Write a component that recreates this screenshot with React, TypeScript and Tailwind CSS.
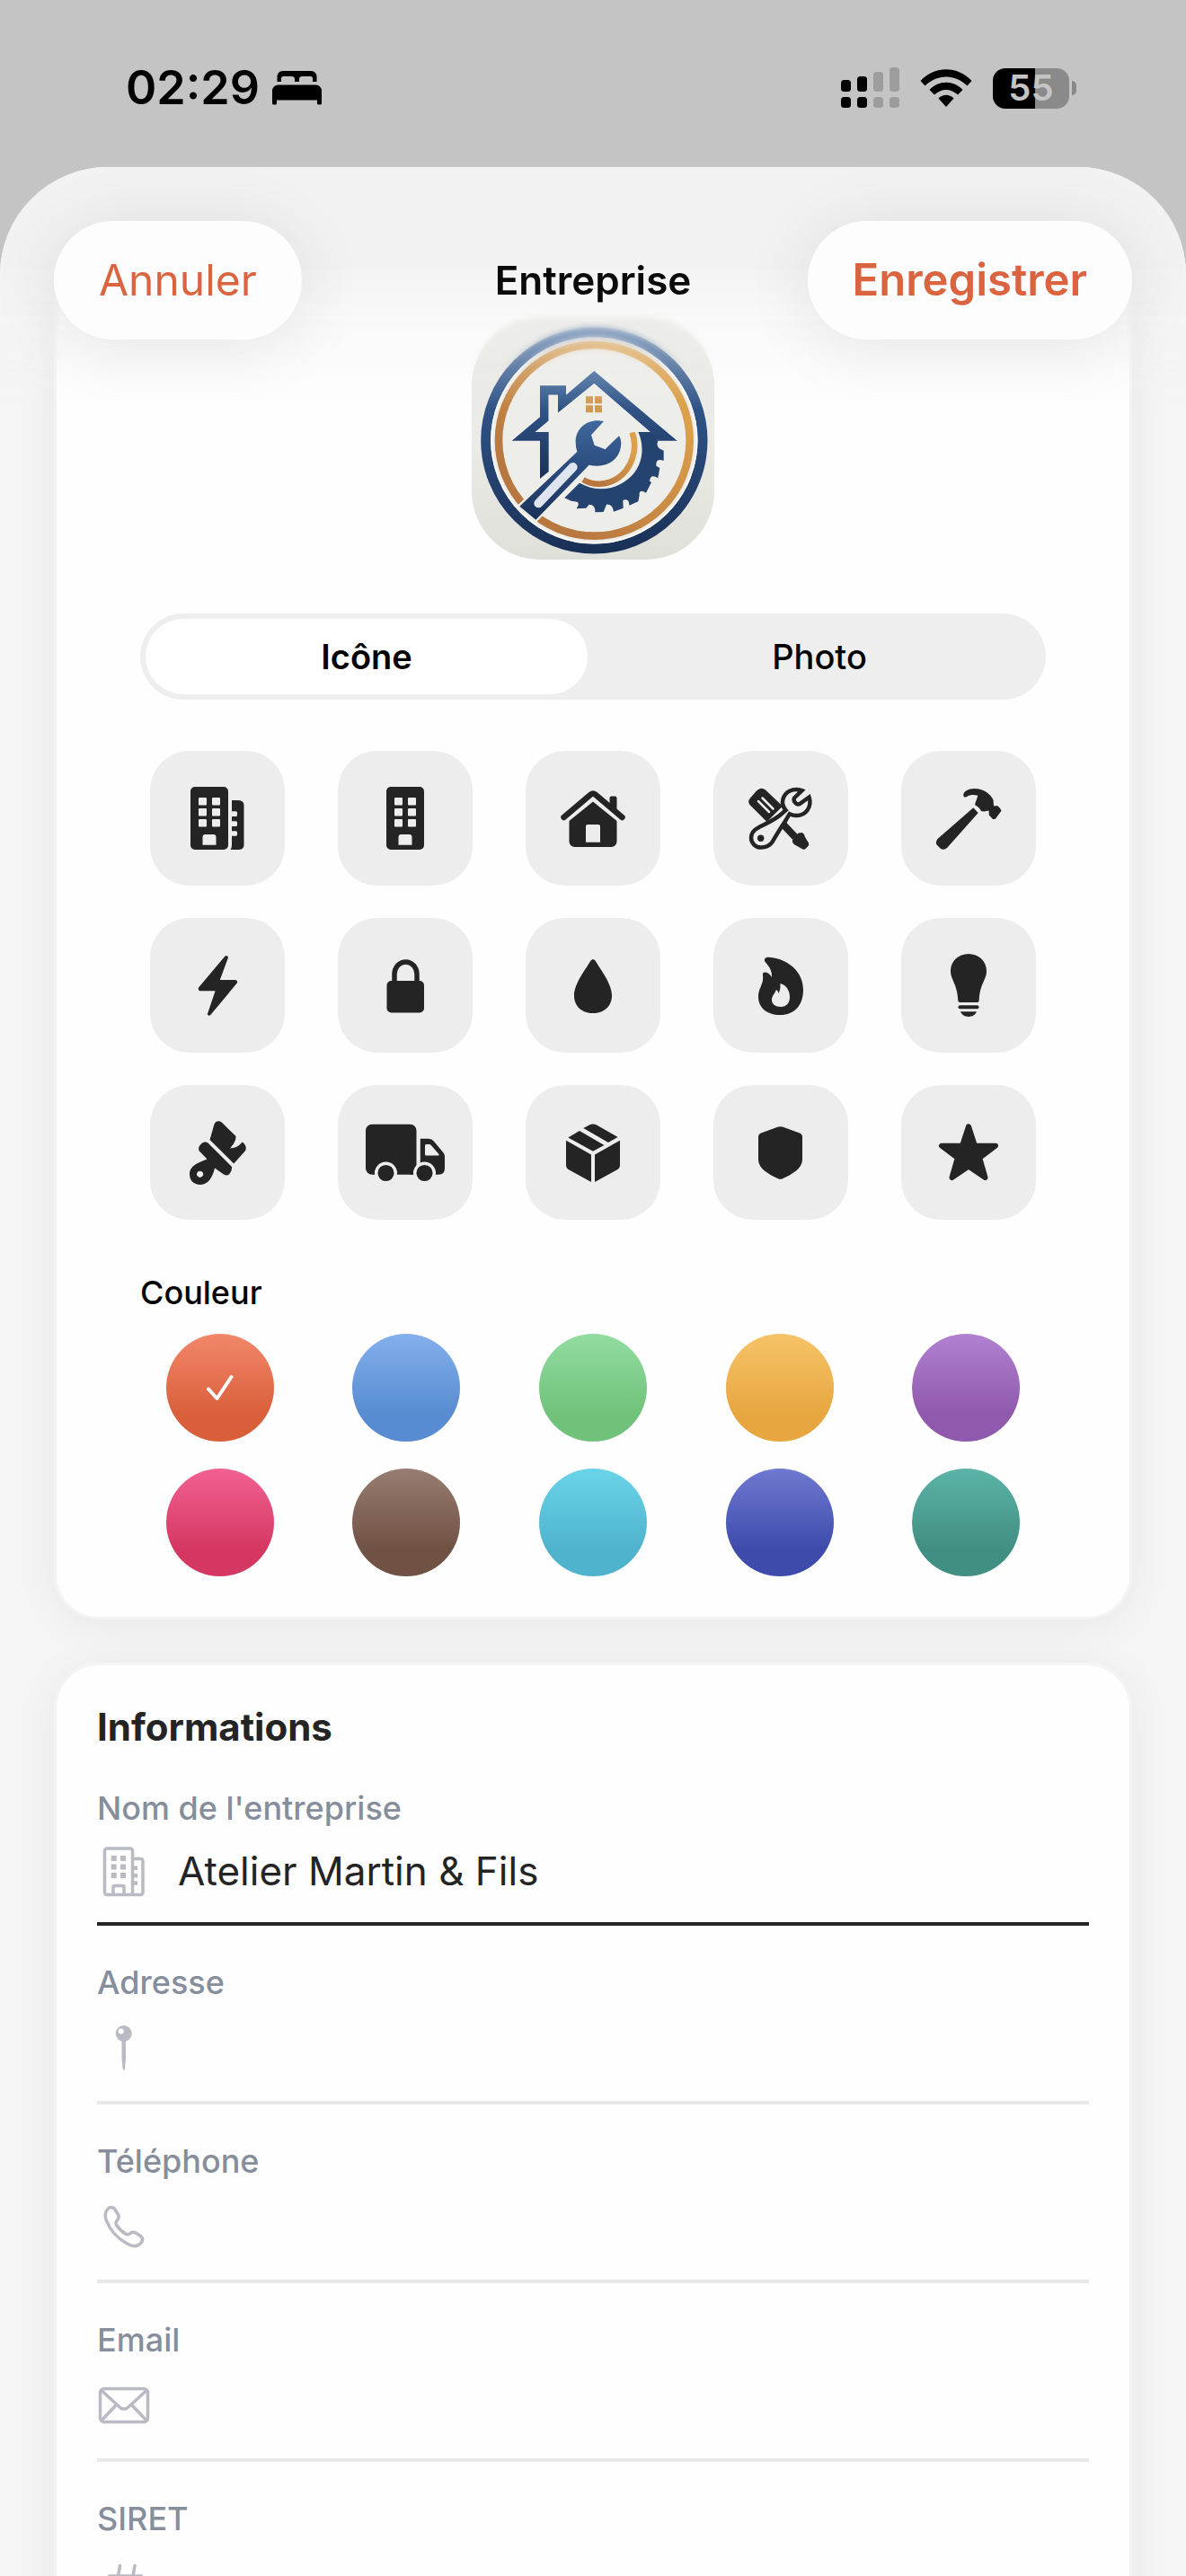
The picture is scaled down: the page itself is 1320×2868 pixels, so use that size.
import { useState } from "react";
import type { ReactNode } from "react";

interface IconChoice {
  id: string;
  label: string;
  art: ReactNode;
}

interface Swatch {
  id: string;
  label: string;
  gradient: string;
}

interface FieldType {
  id: string;
  label: string;
  type: string;
  art: ReactNode;
}

// Tile icons are drawn on a 150x150 grid
const ICONS: IconChoice[] = [
  {
    id: "buildings",
    label: "Immeubles",
    art: (
      <>
        <path
          fillRule="evenodd"
          d="M50 40h32a5 5 0 0 1 5 5v60a5 5 0 0 1-5 5H50a5 5 0 0 1-5-5V45a5 5 0 0 1 5-5ZM55 52a1 1 0 0 0-1 1v6.500a1 1 0 0 0 1 1h7a1 1 0 0 0 1-1V53a1 1 0 0 0-1-1ZM70 52a1 1 0 0 0-1 1v6.500a1 1 0 0 0 1 1h7a1 1 0 0 0 1-1V53a1 1 0 0 0-1-1ZM55 64a1 1 0 0 0-1 1v6.500a1 1 0 0 0 1 1h7a1 1 0 0 0 1-1V65a1 1 0 0 0-1-1ZM70 64a1 1 0 0 0-1 1v6.500a1 1 0 0 0 1 1h7a1 1 0 0 0 1-1V65a1 1 0 0 0-1-1ZM55 76a1 1 0 0 0-1 1v6.500a1 1 0 0 0 1 1h7a1 1 0 0 0 1-1V77a1 1 0 0 0-1-1ZM70 76a1 1 0 0 0-1 1v6.500a1 1 0 0 0 1 1h7a1 1 0 0 0 1-1V77a1 1 0 0 0-1-1ZM61.500 93a3 3 0 0 0-3 3v8.700h15V96a3 3 0 0 0-3-3Z"
        />
        <path d="M91 55h8a5.500 5.500 0 0 1 5.500 5.500V105a5 5 0 0 1-5 5H89.500Q91 108 91 105V94.700h4.500q1.500 0 1.500-1.500v-2.400q0-1.500-1.500-1.500H91V84h4.500q1.500 0 1.500-1.500v-2.700q0-1.500-1.500-1.500H91V73h4.500q1.500 0 1.500-1.500v-2.700q0-1.500-1.500-1.500H91Z" />
      </>
    ),
  },
  {
    id: "building",
    label: "Immeuble",
    art: (
      <path
        fillRule="evenodd"
        d="M59 40h32a5 5 0 0 1 5 5v60a5 5 0 0 1-5 5H59a5 5 0 0 1-5-5V45a5 5 0 0 1 5-5ZM64 52a1 1 0 0 0-1 1v6.500a1 1 0 0 0 1 1h7a1 1 0 0 0 1-1V53a1 1 0 0 0-1-1ZM79 52a1 1 0 0 0-1 1v6.500a1 1 0 0 0 1 1h7a1 1 0 0 0 1-1V53a1 1 0 0 0-1-1ZM64 64a1 1 0 0 0-1 1v6.500a1 1 0 0 0 1 1h7a1 1 0 0 0 1-1V65a1 1 0 0 0-1-1ZM79 64a1 1 0 0 0-1 1v6.500a1 1 0 0 0 1 1h7a1 1 0 0 0 1-1V65a1 1 0 0 0-1-1ZM64 76a1 1 0 0 0-1 1v6.500a1 1 0 0 0 1 1h7a1 1 0 0 0 1-1V77a1 1 0 0 0-1-1ZM79 76a1 1 0 0 0-1 1v6.500a1 1 0 0 0 1 1h7a1 1 0 0 0 1-1V77a1 1 0 0 0-1-1ZM70.500 93a3 3 0 0 0-3 3v8.700h15V96a3 3 0 0 0-3-3Z"
      />
    ),
  },
  {
    id: "house",
    label: "Maison",
    art: (
      <>
        <path d="M42.500 74 72.500 48.500q2.500-2 5 0L107.500 74" fill="none" stroke="currentColor" strokeWidth="6.500" strokeLinecap="round" />
        <path d="M93.500 59V52.500q0-2 2-2h4q2 0 2 2V66Z" />
        <path fillRule="evenodd" d="M75 56.500 101.500 78v23a6 6 0 0 1-6 6h-41a6 6 0 0 1-6-6V78ZM69 82q-2 0-2 2v17.700h16V84q0-2-2-2Z" />
      </>
    ),
  },
  {
    id: "tools",
    label: "Outils",
    art: (
      <>
        <path d="M41 52.500 48 44.500q5-5 10-1L77 61.500 59.500 79 41 60.500q-3.500-4 0-8Z" />
        <path d="m50 56 12 12M54.500 52.500l12 12" fill="none" stroke="#ededed" strokeWidth="2.500" strokeLinecap="round" />
        <path d="m75 79 16 17" stroke="currentColor" strokeWidth="8" />
        <path d="m94.500 91.500 4.500-.500q2.500 1.500 3 5l4 6.500q.800 2-1 4l-2.500 2.500q-1.500 1.300-3.500.200L90.500 104.500q-3-2-2.500-5.500Z" />
        <path
          d="M98.500 44.200 90 52.500q-1 2 .500 4.500 2.500 3.500 5.500 2L106.500 51.500C110 62 103 72 92.500 72 89.500 72 87 71.300 84.800 70.200L79.500 79C74.500 86 70 94 65.500 101.500 62 106.500 57.500 107.500 53 107.500A10.800 10.800 0 0 1 42 97c0-5.500 3-9 8-11.500C59.500 80.500 68 77 75.500 70.500L80.500 66C77 62 76.500 57 77.500 53.500 80 45.500 88.500 40.500 98.500 44.200Z"
          fill="#ededed"
          stroke="currentColor"
          strokeWidth="4.500"
        />
        <circle cx="52.700" cy="97.300" r="3.700" />
      </>
    ),
  },
  {
    id: "hammer",
    label: "Marteau",
    art: (
      <>
        <path d="m80.300 63.300 5.400 5.700L51.500 107.500q-4 4-8 1L40 105q-2.500-3 .500-7Z" />
        <path d="M69.300 50C68.500 45 75 42 81.500 42 93 42 100 49 102.500 54.500L103 61.300h4.500q3 2.500 4 5.500L105 75.500q-2 1.200-3.500 0L97.800 71.500 97.500 66.500 92 67.500 89 67C87.500 64 85 61.500 82.300 60.500 82 57.500 84 55 85.300 49.700 80 48.500 76.500 49 73 51q-3 1.500-3.700-1Z" />
      </>
    ),
  },
  {
    id: "bolt",
    label: "Éclair",
    art: <path d="M83.500 42.500q2.500-1.500 3.500 1.500L77.800 69H95q3 .800 1.800 3.500L67.500 107.800q-2.500 2-3.700-.500L72.600 81.300H55.500q-2.500-1-1.500-3.800Z" />,
  },
  {
    id: "lock",
    label: "Cadenas",
    art: (
      <>
        <rect x="54.500" y="70" width="41.500" height="35.500" rx="5" />
        <path d="M63 72V62.500a12.500 13.500 0 0 1 25 0V72" fill="none" stroke="currentColor" strokeWidth="5.500" />
      </>
    ),
  },
  {
    id: "drop",
    label: "Goutte",
    art: <path d="M72.500 47.500q2.500-3 5 0C83 57 96 73 96 86.500 96 98.500 87 106 75 106S54 98.500 54 86.500C54 73 67 57 72.500 47.500Z" />,
  },
  {
    id: "flame",
    label: "Flamme",
    art: (
      <path
        fillRule="evenodd"
        d="M57.300 48.500C56 45.500 58 43.500 62 43.700 84 45.500 100 60.500 100 80 100 97.500 90 108 74.500 108 59.500 108 50 100 50 87.500 50 79 55 74.500 55.200 67 55.300 65 54.700 64 55 62 56 59.300 61.500 60 65 66 65.500 57.500 61 53 57.300 48.500ZM74.300 73C75 79.500 73.500 81 72.700 84.300 72.500 82 71 80.500 69.700 80 69 84 65 86 65 91.500 65 96 69 99 75 99 81 99 85 95 85 88 85 80 80.500 74.500 74.300 73Z"
      />
    ),
  },
  {
    id: "bulb",
    label: "Ampoule",
    art: (
      <>
        <path d="M75 40C86.500 40 95 48.500 95 59 95 69 87.500 73 86.700 92q-.200 2-2 2H65.300q-1.800 0-2-2C62.500 73 55 69 55 59 55 48.500 63.500 40 75 40Z" />
        <rect x="63.500" y="97.300" width="23" height="4" rx="2" />
        <path d="M66 104.300H84C82.500 108 79 110 75 110S67.500 108 66 104.300Z" />
      </>
    ),
  },
  {
    id: "brush",
    label: "Pinceau",
    art: (
      <>
        <path d="M71.500 43.500q2-4 6.500-3 1.500.500 2.500 1.800L95.500 57q.500 6-6.500 13.500 8 0 13.700-7 5.500 4 3.500 9.500L93.200 87.500 66.500 61Z" />
        <path
          fillRule="evenodd"
          d="M57.500 65q3.500-2.500 7-.500L91 91q.500 5-3 8.500-3 2-6 0L72 92.500C70 101 65.500 111 56 111 48.500 111 44 106 44 99.500 44 89.500 54 86.500 63.500 82.500L54.800 73.500Q52.500 69 57.500 65ZM55.600 95.700a3.600 3.600 0 1 0 .010 0Z"
        />
      </>
    ),
  },
  {
    id: "truck",
    label: "Camion",
    art: (
      <>
        <path d="M38 43.700h42.500a7 7 0 0 1 7 7V99.700H38a7 7 0 0 1-7-7v-42a7 7 0 0 1 7-7Z" />
        <path fillRule="evenodd" d="M91.800 59.700H101q3.500 0 5.500 2.500L117 74.700q2 2 2 5V93q0 6.700-7 6.700H80V96h11.800ZM98.500 66q-1.500 0-1.500 1.500V77q0 1.500 1.500 1.500H112q1.200-.500 0-2L104 67.200Q103 66 101.500 66Z" />
        <circle cx="53.500" cy="98" r="10.800" stroke="#ededed" strokeWidth="3.500" />
        <circle cx="96.500" cy="98" r="10.800" stroke="#ededed" strokeWidth="3.500" />
      </>
    ),
  },
  {
    id: "box",
    label: "Colis",
    art: (
      <>
        <path d="M64.300 48 71 44.500q4-1.800 8 0L102.600 58 92 64Z" />
        <path d="M47.300 58.500 60 51 87.500 67 75 73.700Z" />
        <path d="M45 61.700 73 77.500V108L48.500 94.500Q45 92.500 45 89Z" />
        <path d="M105 61.700 77 77.500V108l24.500-13.500Q105 92.500 105 89Z" />
      </>
    ),
  },
  {
    id: "shield",
    label: "Bouclier",
    art: <path d="M71.500 46.800q3-1.300 6 0L96 53.500q3 1.300 3 4.500V83C99 93 88 99 77 104.300q-2.500 1-5 0C61 99 50 93 50 83V58q0-3.200 3-4.500Z" />,
  },
  {
    id: "star",
    label: "Étoile",
    art: (
      <path
        d="M75 46.300 82 67.700H105L87.200 81 93.500 103 75 90.500 56.500 103 62.800 81 45 67.700H68Z"
        stroke="currentColor"
        strokeWidth="6"
        strokeLinejoin="round"
      />
    ),
  },
];

const SWATCHES: Swatch[] = [
  { id: "orange", label: "Orange", gradient: "from-[#f28769] to-[#d95f3b]" },
  { id: "blue", label: "Bleu", gradient: "from-[#84b0ec] to-[#588bd1]" },
  { id: "green", label: "Vert", gradient: "from-[#92dca0] to-[#70c27b]" },
  { id: "yellow", label: "Jaune", gradient: "from-[#f6c367] to-[#e7a63f]" },
  { id: "purple", label: "Violet", gradient: "from-[#b281d0] to-[#8f59ad]" },
  { id: "pink", label: "Rose", gradient: "from-[#f26092] to-[#d43762]" },
  { id: "brown", label: "Marron", gradient: "from-[#987d72] to-[#705244]" },
  { id: "cyan", label: "Cyan", gradient: "from-[#69d4e9] to-[#50b3ce]" },
  { id: "indigo", label: "Indigo", gradient: "from-[#6f7ad1] to-[#3f4bab]" },
  { id: "teal", label: "Sarcelle", gradient: "from-[#5cb3a7] to-[#408f82]" },
];

// Field icons are drawn on a 60x60 grid
const FIELDS: FieldType[] = [
  {
    id: "name",
    label: "Nom de l'entreprise",
    type: "text",
    art: (
      <>
        <rect x="8.500" y="5" width="31" height="51.500" rx="2.500" />
        <path d="M41 16.500h7.500a2.500 2.500 0 0 1 2.500 2.500v35a2.500 2.500 0 0 1-2.500 2.500H39M18 56V48q0-1.500 1.500-1.500h9Q30 46.500 30 48v8" />
        <path
          d="M15.700 13h6v6h-6ZM26 13h6v6h-6ZM15.700 22.500h6v6h-6ZM26 22.500h6v6h-6ZM15.700 32h6v6h-6ZM26 32h6v6h-6ZM41 24.500h4v4.500h-4ZM41 33h4v4.500h-4ZM41 41.200h4v4.500h-4Z"
          fill="currentColor"
          stroke="none"
        />
      </>
    ),
  },
  {
    id: "address",
    label: "Adresse",
    type: "text",
    art: (
      <>
        <path d="M27.500 20h4.500v22l-1 11q-1.200 4-2.500 0l-1-11Z" fill="currentColor" stroke="none" />
        <circle cx="29.700" cy="14" r="9" fill="currentColor" stroke="none" />
        <circle cx="26.700" cy="11.500" r="3" fill="#fff" stroke="none" />
      </>
    ),
  },
  {
    id: "phone",
    label: "Téléphone",
    type: "tel",
    art: (
      <path d="M11.500 11C14 7.500 18 8 20 11l3.500 5.500q1.500 2.500-.200 5l-2 3q-.800 1.500.200 3.500 4 6.500 10.500 10.300 1.800 1 3.500.200l2.500-1.600q2.500-1.400 5 .100l5.500 3.500q4 3.500.500 7.500C45.500 52.500 40 52.500 34.500 49.500 23 43.500 14.500 34 10.500 23.500 8.500 18.500 9 14 11.500 11Z" />
    ),
  },
  {
    id: "email",
    label: "Email",
    type: "email",
    art: (
      <>
        <rect x="3.500" y="11.500" width="53" height="37" rx="4.500" />
        <path d="m5 13.500 20.500 18.800q4.500 3.500 9 0L55 13.500M5 46.800 21.500 29.500M55 46.800 38.500 29.500" />
      </>
    ),
  },
  {
    id: "siret",
    label: "SIRET",
    type: "text",
    art: <path d="M25.500 9.500 18.500 51M42 9.500 35 51M13.500 21h36M10.500 39h36" strokeLinecap="round" />,
  },
];

function StatusBar() {
  return (
    <div className="flex h-[186px] shrink-0 items-center justify-between pt-[10px] pr-[122px] pl-[140px] text-black">
      <div className="flex items-center gap-[14px]">
        <time className="text-[52px] leading-none font-semibold">02:29</time>
        <svg viewBox="0 0 56 38" className="h-[38px] w-14" fill="currentColor" aria-hidden="true">
          <path d="M5.500 12V6a6 6 0 0 1 6-6h32a6 6 0 0 1 6 6v6H45V8.500Q45 6 42.500 6h-9Q31 6 30 8v4h-5V8q-1-2-3.500-2h-9Q10 6 10 8.500V12Z" />
          <path d="M0 22a6.500 6.500 0 0 1 6.500-6.500h42A6.500 6.500 0 0 1 55 22v14q0 1.500-1.500 1.500h-2Q50 37.500 50 36v-3.500H5V36q0 1.500-1.500 1.500h-2Q0 37.500 0 36Z" />
        </svg>
      </div>

      <div className="flex items-center gap-[23px]">
        <svg viewBox="0 0 65 46" className="h-[46px] w-[65px]" aria-hidden="true">
          <rect x="0" y="14" width="11" height="13" rx="3.500" />
          <rect x="18" y="10" width="11" height="17" rx="3.500" />
          <rect x="36" y="5" width="11" height="22" rx="3.500" fill="#9d9d9d" />
          <rect x="54" y="0" width="11" height="27" rx="3.500" fill="#9d9d9d" />
          <rect x="0" y="33" width="11" height="12" rx="3.500" />
          <rect x="18" y="33" width="11" height="12" rx="3.500" />
          <rect x="36" y="33" width="11" height="12" rx="3.500" fill="#9d9d9d" />
          <rect x="54" y="33" width="11" height="12" rx="3.500" fill="#9d9d9d" />
        </svg>
        <svg viewBox="0 0 58 42" className="h-[42px] w-[58px]" aria-hidden="true">
          <path d="M0.500 13C16 -4 42 -4 57.500 13L52.500 18.500C39 5 19 5 5.500 18.500Z" />
          <path d="M10.500 23C20.500 12 37.500 12 47.500 23L42 28.500C34.500 21 23.500 21 16 28.500Z" />
          <path d="M20.500 32.500C25.500 27.500 32.500 27.500 37.500 32.500L29 42Z" />
        </svg>
        <div className="flex items-center gap-[3px]">
          <div className="flex h-[45px] w-[85px] items-center justify-center rounded-[14px] bg-linear-to-r from-black from-55% to-[#8a8a8a] to-55%">
            <span className="text-[40px] leading-none font-semibold text-[#c4c4c4]">55</span>
          </div>
          <div className="h-4 w-[5px] rounded-r-full bg-[#8a8a8a]" />
        </div>
      </div>
    </div>
  );
}

function CompanyLogo() {
  return (
    <svg viewBox="78 68 810 810" className="size-[270px] rounded-[76px]" role="img" aria-label="Logo de l'entreprise">
      <defs>
        <linearGradient id="paper" x1="0" y1="0" x2="0" y2="1">
          <stop offset="0" stopColor="#e6e6e2" />
          <stop offset="0.500" stopColor="#ebebe7" />
          <stop offset="1" stopColor="#dfe0da" />
        </linearGradient>
        <linearGradient id="navy" x1="0" y1="0" x2="0" y2="1">
          <stop offset="0" stopColor="#3f679c" />
          <stop offset="0.500" stopColor="#2a4b7c" />
          <stop offset="1" stopColor="#1a3157" />
        </linearGradient>
        <linearGradient id="copper" x1="0.800" y1="0.200" x2="0.200" y2="0.800">
          <stop offset="0" stopColor="#dca04a" />
          <stop offset="1" stopColor="#b97740" />
        </linearGradient>
      </defs>
      <rect x="78" y="68" width="810" height="810" fill="url(#paper)" />
      <circle cx="487" cy="480" r="362" fill="#ededea" stroke="url(#navy)" strokeWidth="33" />
      <circle cx="487" cy="480" r="343" fill="none" stroke="#fbfbf9" strokeWidth="5" />
      <circle cx="487" cy="480" r="319" fill="none" stroke="url(#copper)" strokeWidth="26" />

      {/* saw blade */}
      <path
        d="M634 452 682 452 700 482Q690 505 719 514L719 548Q692 538 694 565L706 572 700 606Q675 590 672 616L678 620 660 655Q636 640 638 664L634 684 604 697Q604 672 583 680L584 706 552 718Q548 692 528 694L518 719 490 720Q492 695 470 694L460 706 428 708Q444 684 420 684L410 682 388 672 438 622C480 646 530 648 570 628 640 596 664 520 634 452Z"
        fill="#24436f"
      />
      <path d="M614 453C634 510 612 575 566 606 530 630 484 632 450 611" fill="none" stroke="url(#copper)" strokeWidth="20" />

      {/* house outline */}
      <path
        d="M487 248 764 481H700L674 452 487 290 366 388V328H335V415L290 452H335V584L306 608V481H212L306 402V297H393V328Z"
        fill="url(#navy)"
      />
      <path d="M335 328H366V388L335 415Z" fill="#ededea" />
      <path d="M290 452 366 388 487 290 674 452H335Z" fill="#ededea" />
      <path d="M459 333h24v24h-24ZM489 333h24v24h-24ZM459 363h24v24h-24ZM489 363h24v24h-24Z" fill="#d09a53" />

      {/* wrench */}
      <path
        d="M519 416C470 405 425 435 425 485Q425 505 430 518L238 700 292 745 470 562C520 575 575 550 577 490Q577 475 570 465L543 490 524 510 488 496 477 462Z"
        fill="#ededea"
        stroke="#ededea"
        strokeWidth="14"
      />
      <path
        d="M519 416C470 405 425 435 425 485Q425 505 430 518L238 700 292 745 470 562C520 575 575 550 577 490Q577 475 570 465L543 490 524 510 488 496 477 462Z"
        fill="url(#navy)"
      />
      <path d="M301 690 416 569" stroke="#dfe5ef" strokeWidth="30" strokeLinecap="round" />
    </svg>
  );
}

export default function App() {
  const [tab, setTab] = useState("icon");
  const [color, setColor] = useState("orange");
  const [values, setValues] = useState<Record<string, string>>({ name: "Atelier Martin & Fils" });

  const tabs = [
    { id: "icon", label: "Icône" },
    { id: "photo", label: "Photo" },
  ];

  return (
    <div className="flex h-screen flex-col overflow-hidden bg-[#c4c4c4] font-['Inter','Liberation_Sans',sans-serif]">
      <StatusBar />

      <div className="relative min-h-0 flex-1 overflow-hidden rounded-t-[120px] bg-[#f5f5f5]">
        {/* Top bar floats over the scrolled form */}
        <header className="absolute inset-x-0 top-0 z-10">
          <div className="absolute inset-x-0 top-0 h-[230px] backdrop-blur-[3px] [mask-image:linear-gradient(to_bottom,black_75%,transparent)]" />
          <div className="absolute inset-x-0 top-0 h-[270px] bg-linear-to-b from-[#f2f2f2] from-40% via-[#f4f4f4]/45 via-65% to-transparent" />
          <div className="relative grid grid-cols-[1fr_auto_1fr] items-center px-[60px] pt-[60px]">
            <button
              type="button"
              className="h-[132px] justify-self-start rounded-full bg-[#fdfdfd] px-[50px] text-[48px] text-[#d9643f] shadow-[0_6px_80px_rgba(0,0,0,0.09)]"
            >
              Annuler
            </button>
            <h1 className="text-[44px] font-semibold text-[#0a0a0a]">Entreprise</h1>
            <button
              type="button"
              className="h-[132px] justify-self-end rounded-full bg-[#fdfdfd] px-[50px] text-[49px] font-semibold text-[#d9643f] shadow-[0_6px_80px_rgba(0,0,0,0.09)]"
            >
              Enregistrer
            </button>
          </div>
        </header>

        <main className="flex flex-col gap-12 px-[60px] pt-[104px]">
          <section className="rounded-[51px] border-[3px] border-[#f4f4f4] bg-[#fefefe] px-[93px] pt-[60px] pb-[45px] shadow-[0_6px_48px_rgba(0,0,0,0.06)]">
            <div className="flex justify-center">
              <CompanyLogo />
            </div>

            <div className="mt-[60px] grid grid-cols-2 gap-3 rounded-full bg-[#eeeeee] p-[6px]">
              {tabs.map((item) => (
                <button
                  key={item.id}
                  type="button"
                  aria-pressed={tab === item.id}
                  onClick={() => setTab(item.id)}
                  className={`h-[84px] rounded-full text-[38px] text-black ${
                    tab === item.id ? "bg-white font-semibold" : "font-medium"
                  }`}
                >
                  {item.label}
                </button>
              ))}
            </div>

            <div className="mt-[57px] grid grid-cols-5 justify-items-center gap-9">
              {ICONS.map((icon) => (
                <button
                  key={icon.id}
                  type="button"
                  aria-label={icon.label}
                  className="size-[150px] rounded-[44px] bg-[#ededed] text-[#242424]"
                >
                  <svg viewBox="0 0 150 150" className="size-full" fill="currentColor" aria-hidden="true">
                    {icon.art}
                  </svg>
                </button>
              ))}
            </div>

            <h2 className="mt-[57px] text-[36px] leading-[48px] font-medium text-black">Couleur</h2>
            <div className="mt-[22px] grid grid-cols-5 justify-items-center gap-[30px]">
              {SWATCHES.map((swatch) => (
                <button
                  key={swatch.id}
                  type="button"
                  aria-label={swatch.label}
                  aria-pressed={color === swatch.id}
                  onClick={() => setColor(swatch.id)}
                  className={`flex size-[120px] items-center justify-center rounded-full bg-linear-to-b to-75% ${swatch.gradient}`}
                >
                  {color === swatch.id && (
                    <svg viewBox="0 0 30 30" className="size-[30px]" fill="none" stroke="#fff" strokeWidth="4" strokeLinecap="round" strokeLinejoin="round" aria-hidden="true">
                      <path d="M2 16.500 11.500 27 27.500 3" />
                    </svg>
                  )}
                </button>
              ))}
            </div>
          </section>

          <section className="rounded-[51px] border-[3px] border-[#f4f4f4] bg-[#fefefe] px-[45px] pt-[42px] pb-[60px] shadow-[0_6px_48px_rgba(0,0,0,0.06)]">
            <h2 className="text-[42px] leading-[54px] font-bold text-[#242424]">Informations</h2>

            {FIELDS.map((field) => {
              const filled = Boolean(values[field.id]);
              return (
                <div key={field.id} className="mt-[39px]">
                  <label htmlFor={field.id} className="block text-[36px] leading-[48px] font-medium text-[#868e9c]">
                    {field.label}
                  </label>
                  <div
                    className={`flex items-center gap-[30px] border-b-4 pb-[11px] ${
                      filled ? "h-[107px] border-[#242424]" : "h-28 border-[#e9e9e9]"
                    }`}
                  >
                    <svg viewBox="0 0 60 60" className="size-[60px] shrink-0 text-[#b9bac4]" fill="none" stroke="currentColor" strokeWidth="3.500" strokeLinejoin="round" aria-hidden="true">
                      {field.art}
                    </svg>
                    <input
                      id={field.id}
                      type={field.type}
                      value={values[field.id] ?? ""}
                      onChange={(e) => setValues({ ...values, [field.id]: e.target.value })}
                      className="min-w-0 flex-1 bg-transparent text-[44px] leading-[56px] text-[#242424] outline-none"
                    />
                  </div>
                </div>
              );
            })}
          </section>
        </main>
      </div>
    </div>
  );
}
